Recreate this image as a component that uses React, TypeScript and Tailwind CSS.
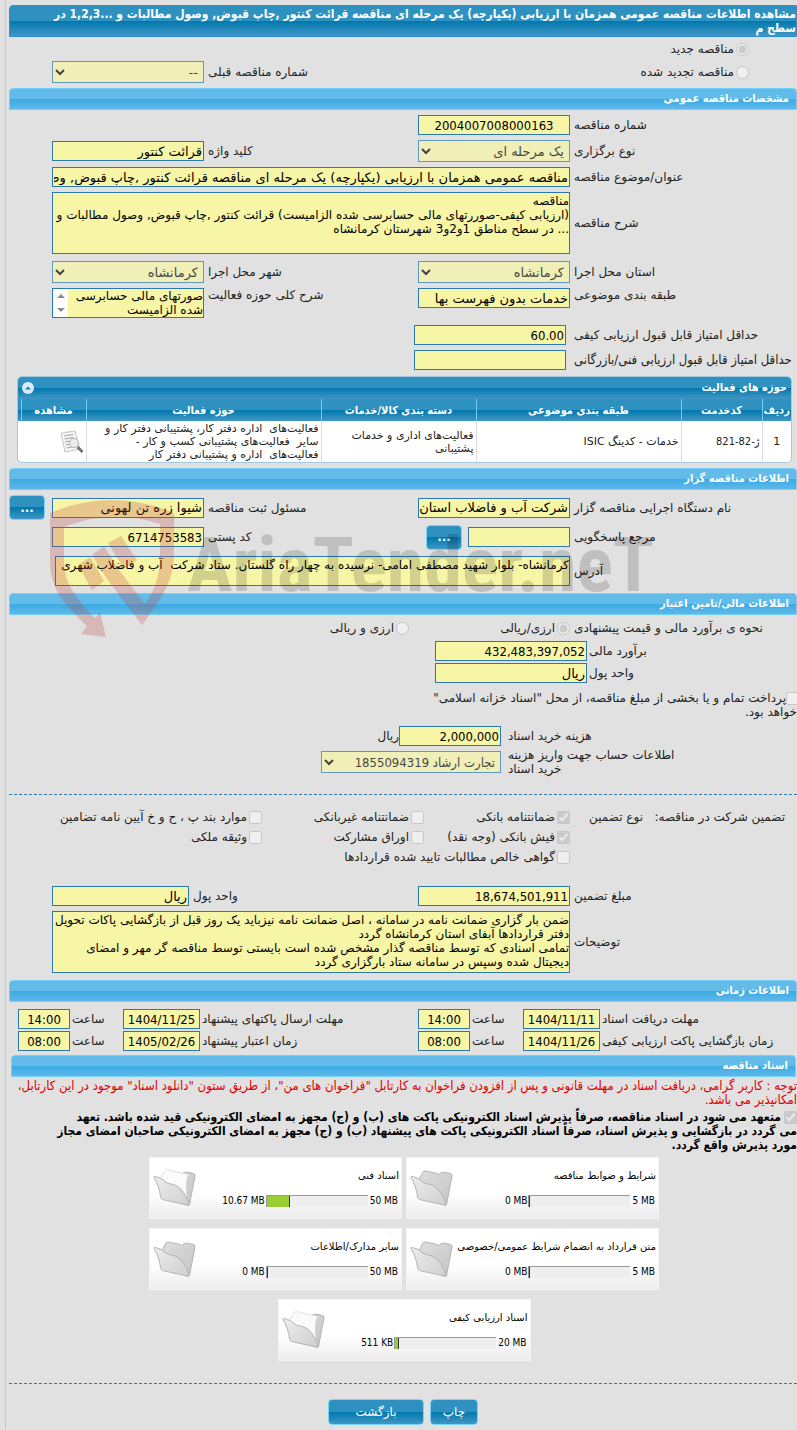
import { ReactNode } from "react";
import clsx from "clsx";

const field =
  "block w-full min-w-0 border border-[#2a7ab0] bg-[#f7f5a6] px-px text-[13px] text-black outline-none";
const row =
  "grid grid-cols-[227px_152px_minmax(0,1fr)_152px_43px] items-center";
const darkBar = "bg-[linear-gradient(#2e91c0_50%,#0078ae_50%,#4297c4)]";
const lightBar = "bg-[linear-gradient(#62bbe9_50%,#3baae3_50%,#5fb8e9)]";
const condensed = "font-['DejaVu_Sans_Condensed','DejaVu_Sans',sans-serif]";

function SectionTitle({
  children,
  className,
}: {
  children: ReactNode;
  className?: string;
}) {
  return (
    <h2
      className={clsx(
        "h-[22px] rounded-t border border-[#72d0fa] px-[7px] text-[11px] leading-5 font-bold text-white",
        condensed,
        lightBar,
        className,
      )}
    >
      {children}
    </h2>
  );
}

function Label({
  id,
  children,
  className,
}: {
  id: string;
  children: ReactNode;
  className?: string;
}) {
  return (
    <label htmlFor={id} className={clsx("pl-1 text-left", className)}>
      {children}
    </label>
  );
}

function Text({
  id,
  value,
  className,
  numeric,
}: {
  id: string;
  value: string;
  className?: string;
  numeric?: boolean;
}) {
  return (
    <input
      id={id}
      type="text"
      readOnly
      value={value}
      className={clsx(field, "h-5", numeric && condensed, className)}
    />
  );
}

function Select({
  id,
  value,
  className,
}: {
  id: string;
  value: string;
  className?: string;
}) {
  return (
    <select
      id={id}
      disabled
      className={clsx(field, "h-[22px] opacity-70", className)}
    >
      <option>{value}</option>
    </select>
  );
}

function Area({
  id,
  value,
  className,
}: {
  id: string;
  value: string;
  className?: string;
}) {
  return (
    <textarea
      id={id}
      readOnly
      value={value}
      className={clsx(
        "block w-full resize-none overflow-hidden border border-[#2a7ab0] bg-[#f7f5a6] py-px text-[12px] leading-[14px] text-black outline-none",
        className,
      )}
    />
  );
}

function Check({
  children,
  checked = false,
  type = "checkbox",
  className,
}: {
  children: ReactNode;
  checked?: boolean;
  type?: "checkbox" | "radio";
  className?: string;
}) {
  return (
    <label className={clsx("flex items-center gap-[2px]", className)}>
      <input
        type={type}
        disabled
        checked={checked}
        readOnly
        className="size-[13px] shrink-0"
      />
      <span>{children}</span>
    </label>
  );
}

function BlueButton({
  children,
  className,
  label,
}: {
  children: ReactNode;
  className?: string;
  label?: string;
}) {
  return (
    <button
      type="button"
      aria-label={label}
      className={clsx(
        "rounded-[4px] border border-[#77d5f7] text-[12px] leading-none text-white",
        darkBar,
        className,
      )}
    >
      {children}
    </button>
  );
}

function FolderIcon({ filled }: { filled?: boolean }) {
  return (
    <svg viewBox="0 0 44 40" className="h-10 w-11 shrink-0">
      <defs>
        <linearGradient id="folderBack" x1="0" y1="0" x2="1" y2="1">
          <stop offset="0" stopColor="#dedede" />
          <stop offset="1" stopColor="#c4c4c4" />
        </linearGradient>
        <linearGradient id="folderFront" x1="0" y1="0" x2="1" y2="1">
          <stop offset="0" stopColor="#ededed" />
          <stop offset="1" stopColor="#cfcfcf" />
        </linearGradient>
      </defs>
      <path
        d="M9 12 12.500 4.500Q13.300 2.700 15.500 3L25 5Q27 5.400 28.500 6.500Q31 3.500 35 4.300L40.500 5.500Q42.500 6 42 8L36.500 36.500Q36 38 34.500 37.200L14 30Z"
        fill="url(#folderBack)"
        stroke="#b4b4b4"
      />
      {filled && (
        <path
          d="M8 11Q11 2 14 1.500L36 6.500Q32 10 34 30L12 20Z"
          fill="#fbfbfb"
          stroke="#d0d0d0"
          strokeWidth=".6"
        />
      )}
      <path
        d="M1 9.500Q.600 8 2.500 8.500Q9 10 12 13.500Q14 15.500 18 16Q26 17 31 25Q34 30 36.300 36Q36 37.500 34 37L9.500 31.500Q8 31 7.700 29.500Q6 17 1 9.500Z"
        fill="url(#folderFront)"
        stroke="#b4b4b4"
      />
    </svg>
  );
}

const folders = [
  { title: "شرایط و ضوابط مناقصه", used: "0 MB", total: "5 MB", percent: 0 },
  { title: "اسناد فنی", used: "10.67 MB", total: "50 MB", percent: 23 },
  {
    title: "متن قرارداد به انضمام شرایط عمومی/خصوصی",
    used: "0 MB",
    total: "5 MB",
    percent: 0,
  },
  { title: "سایر مدارک/اطلاعات", used: "0 MB", total: "50 MB", percent: 0 },
  { title: "اسناد ارزیابی کیفی", used: "511 KB", total: "20 MB", percent: 4 },
];

function FolderCard({ title, used, total, percent }: (typeof folders)[number]) {
  return (
    <div
      dir="ltr"
      className="flex h-[62px] w-[253px] items-center border border-[#f4f4f4] bg-linear-to-b from-white from-60% to-[#ececec] pr-[2px] pl-[3px] text-[10px] leading-3 text-black"
    >
      <FolderIcon filled={percent > 0} />
      <div className="flex min-w-0 flex-1 flex-col gap-[13px]">
        <div dir="rtl" className="whitespace-nowrap">
          {title}
        </div>
        <div
          className={clsx(
            "flex items-center justify-end gap-px pr-px",
            condensed,
          )}
        >
          <span>{used}</span>
          <div className="flex h-3 w-[102px] border-t border-l border-[#999] bg-[#eee]">
            <div
              className="border-r border-[#333] bg-[#9acd32]"
              style={{ width: `${percent}%` }}
            />
          </div>
          <span className="pl-px">{total}</span>
        </div>
      </div>
    </div>
  );
}

function DocumentIcon() {
  return (
    <svg viewBox="0 0 24 24" className="size-6">
      <path
        d="M1 3 15 1 20 19 5 22Z"
        fill="#f4f4f4"
        stroke="#b9b9b9"
        strokeWidth=".8"
      />
      <path
        d="M4 6l9-1.500M4.500 9l9-1.500M5 12l5-1M6 15l4-1M6.500 18l6-1"
        stroke="#a8a8a8"
        strokeWidth="1.200"
      />
      <circle cx="14" cy="13" r="4.500" fill="#ececec" stroke="#b5b5b5" />
      <path d="m17.500 17 5 5" stroke="#6f6f6f" strokeWidth="2.600" />
    </svg>
  );
}

function Watermark() {
  return (
    <div
      dir="ltr"
      aria-hidden="true"
      className="pointer-events-none absolute top-8 left-[41px] flex items-start"
    >
      <svg
        viewBox="50 500 125 138"
        className="h-[138px] w-[125px] shrink-0 fill-[#c03c3c]/25"
      >
        <path d="M50 513Q112 487 174 513V555C174 582 160 600 142 625L107 579 119 570 145 604C155 590 160 575 160 555V524Q112 508 64 527V560C64 584 76 598 95 618L100 612 106 637 81 634 87 626C65 605 50 590 50 560Z" />
        <path d="M78 565 90 557 104 581 92 590ZM108 543 121 536 137 560 124 569Z" />
        <path d="M92 555 104 546 119 570 107 579Z" />
      </svg>
      <span className="ml-3 pt-[21px] font-['Liberation_Sans_Narrow','Roboto_Condensed','Roboto',sans-serif] text-[76px] leading-[88px] font-bold whitespace-nowrap text-black/15">
        AriaTender.neT
      </span>
    </div>
  );
}

export default function App() {
  return (
    <div
      dir="rtl"
      className="min-h-screen overflow-hidden bg-[#e1e1e1] pl-[5px] font-['DejaVu_Sans',sans-serif] text-[12px] leading-[14px] text-[#222]"
    >
      <main className="border-l border-[#c8c8c8] pt-[5px] pb-1 pl-[3px]">
        <h1
          className={clsx(
            "min-h-8 rounded-tl border border-[#2a8fdc] py-px text-[12px] font-bold text-white",
            condensed,
            darkBar,
          )}
        >
          مشاهده اطلاعات مناقصه عمومی همزمان با ارزیابی (یکپارچه) یک مرحله ای
          مناقصه قرائت کنتور ,چاپ قبوض, وصول مطالبات و ...1,2,3 در
          <br />
          سطح م
        </h1>

        <Check type="radio" checked className="h-6 pr-12">
          مناقصه جدید
        </Check>
        <div className={row}>
          <Check type="radio" className="pr-12">
            مناقصه تجدید شده
          </Check>
          <span />
          <Label id="prev">شماره مناقصه قبلی</Label>
          <Select id="prev" value="--" />
        </div>

        <SectionTitle className="mt-[5px]">مشخصات مناقصه عمومی</SectionTitle>
        <div className={clsx(row, "mt-[5px]")}>
          <Label id="number">شماره مناقصه</Label>
          <Text
            id="number"
            numeric
            value="2004007008000163"
            className="text-center"
          />
        </div>
        <div className={clsx(row, "mt-[5px]")}>
          <Label id="kind">نوع برگزاری</Label>
          <Select id="kind" value="یک مرحله ای" />
          <Label id="keyword">کلید واژه</Label>
          <Text id="keyword" value="قرائت کنتور" />
        </div>
        <div className={clsx(row, "mt-[5px]")}>
          <Label id="subject">عنوان/موضوع مناقصه</Label>
          <Text
            id="subject"
            value="مناقصه عمومی همزمان با ارزیابی (یکپارچه) یک مرحله ای مناقصه قرائت کنتور ,چاپ قبوض, وصول مطالبات و ...1,2,3 در سطح مناطق"
            className="col-span-3"
          />
        </div>
        <div className={clsx(row, "mt-[5px]")}>
          <Label id="desc">شرح مناقصه</Label>
          <Area
            id="desc"
            className="col-span-3 h-[62px]"
            value={
              "مناقصه\n(ارزیابی کیفی-صوررتهای مالی حسابرسی شده الزامیست) قرائت کنتور ,چاپ قبوض, وصول مطالبات و\n... در سطح مناطق 1و2و3 شهرستان کرمانشاه"
            }
          />
        </div>
        <div className={clsx(row, "mt-[7px]")}>
          <Label id="province">استان محل اجرا</Label>
          <Select id="province" value="کرمانشاه" />
          <Label id="city">شهر محل اجرا</Label>
          <Select id="city" value="کرمانشاه" />
        </div>
        <div className={clsx(row, "mt-[5px] !items-start")}>
          <Label id="class">طبقه بندی موضوعی</Label>
          <Text id="class" value="خدمات بدون فهرست بها" />
          <Label id="scope">شرح کلی حوزه فعالیت</Label>
          <div className="flex h-[30px] border border-[#2a7ab0] bg-[#f7f5a6]">
            <textarea
              id="scope"
              readOnly
              value="صورتهای مالی حسابرسی شده الزامیست"
              className="min-w-0 flex-1 resize-none overflow-hidden text-[12px] leading-[14px] text-black outline-none"
            />
            <div className="flex w-[15px] flex-col items-center justify-between bg-white py-[5px]">
              <svg viewBox="0 0 8 4" className="h-1 w-2 fill-[#8b8b8b]">
                <path d="M0 4 4 0 8 4Z" />
              </svg>
              <svg viewBox="0 0 8 4" className="h-1 w-2 fill-[#8b8b8b]">
                <path d="M0 0 4 4 8 0Z" />
              </svg>
            </div>
          </div>
        </div>
        <div className={clsx(row, "mt-[7px]")}>
          <Label id="minQuality">حداقل امتیاز قابل قبول ارزیابی کیفی</Label>
          <Text id="minQuality" numeric value="60.00" className="mr-1" />
        </div>
        <div className={clsx(row, "mt-[5px]")}>
          <Label
            id="minTech"
            className={clsx("text-[13px] whitespace-nowrap", condensed)}
          >
            حداقل امتیاز قابل قبول ارزیابی فنی/بازرگانی
          </Label>
          <Text id="minTech" value="" className="mr-1" />
        </div>

        <section className="mt-[6px] mr-[5px] ml-2 overflow-hidden rounded-[5px] border border-[#a6c9e2] bg-white">
          <div
            className={clsx(
              "flex h-[22px] items-center justify-between px-1",
              darkBar,
            )}
          >
            <h3 className={clsx("text-[11px] font-bold text-white", condensed)}>
              حوزه های فعالیت
            </h3>
            <button type="button" aria-label="بستن">
              <svg viewBox="0 0 12 12" className="size-3">
                <circle cx="6" cy="6" r="6" fill="#dbeaf8" />
                <path d="M3 7.500 6 4.500 9 7.500Z" fill="#217bb0" />
              </svg>
            </button>
          </div>
          <table className="w-full table-fixed border-collapse text-[11px] leading-[13px]">
            <thead className={condensed}>
              <tr className={clsx("h-[22px] text-white", darkBar)}>
                <th className="w-[29px] border-l border-[#6fcdf5] font-bold">
                  ردیف
                </th>
                <th className="w-[81px] border-l border-[#6fcdf5]">کدخدمت</th>
                <th className="w-[205px] border-l border-[#6fcdf5]">
                  طبقه بندی موضوعی
                </th>
                <th className="w-[155px] border-l border-[#6fcdf5]">
                  دسته بندی کالا/خدمات
                </th>
                <th className="border-l border-[#6fcdf5]">حوزه فعالیت</th>
                <th className="w-[65px] border-l border-[#6fcdf5]">مشاهده</th>
                <th className="w-[3px]" />
              </tr>
            </thead>
            <tbody>
              <tr className="h-[41px]">
                <td className="border-l border-[#ddd] text-center">1</td>
                <td
                  className={clsx("border-l border-[#ddd] px-[2px]", condensed)}
                >
                  ژ-82-821
                </td>
                <td className="border-l border-[#ddd] px-[2px]">
                  خدمات - کدینگ ISIC
                </td>
                <td className="border-l border-[#ddd] px-[2px]">
                  فعالیت‌های اداری و خدمات پشتیبانی
                </td>
                <td className="border-l border-[#ddd] px-[2px]">
                  فعالیت‌های&nbsp; اداره دفتر کار، پشتیبانی دفتر کار و
                  <br />
                  سایر&nbsp; فعالیت‌های پشتیبانی کسب و کار -
                  <br />
                  فعالیت‌های&nbsp; اداره و پشتیبانی دفتر کار
                </td>
                <td className="px-[2px]">
                  <DocumentIcon />
                </td>
                <td />
              </tr>
            </tbody>
          </table>
        </section>

        <div className="relative">
          <SectionTitle className="mt-[5px]">اطلاعات مناقصه گزار</SectionTitle>
          <div className={clsx(row, "mt-[5px] h-[25px]")}>
            <Label id="org">نام دستگاه اجرایی مناقصه گزار</Label>
            <Text id="org" value="شرکت آب و فاضلاب استان" />
            <Label id="clerk">مسئول ثبت مناقصه</Label>
            <Text id="clerk" value="شیوا زره تن لهونی" />
            <BlueButton
              label="انتخاب مسئول"
              className="h-[25px] w-9 justify-self-end font-bold"
            >
              ...
            </BlueButton>
          </div>
          <div className={clsx(row, "mt-1 h-[26px]")}>
            <Label id="contact">مرجع پاسخگویی</Label>
            <div className="flex items-center gap-[6px]">
              <Text id="contact" value="" className="!w-[102px]" />
              <BlueButton
                label="انتخاب مرجع"
                className="h-[25px] w-9 font-bold"
              >
                ...
              </BlueButton>
            </div>
            <Label id="postal">کد پستی</Label>
            <Text id="postal" numeric value="6714753583" />
          </div>
          <div className={clsx(row, "mt-[6px]")}>
            <Label id="address">آدرس</Label>
            <Area
              id="address"
              className="col-span-3 h-[30px] !w-[calc(100%-3px)]"
              value="کرمانشاه- بلوار شهید مصطفی امامی- نرسیده به چهار راه گلستان. ستاد شرکت  آب و فاضلاب شهری"
            />
          </div>
          <SectionTitle className="mt-[7px]">
            اطلاعات مالی/تامین اعتبار
          </SectionTitle>
          <Watermark />
        </div>

        <div className="flex h-[26px] items-center">
          <span className="w-[227px] pl-1 text-left">
            نحوه ی برآورد مالی و قیمت پیشنهادی
          </span>
          <Check type="radio" checked className="w-[161px]">
            ارزی/ریالی
          </Check>
          <Check type="radio">ارزی و ریالی</Check>
        </div>
        <div className="grid grid-cols-[210px_152px] items-center gap-y-[2px]">
          <Label id="estimate" className="!pl-[2px]">
            برآورد مالی
          </Label>
          <Text id="estimate" numeric value="432,483,397,052" />
          <Label id="unit" className="!pl-[2px]">
            واحد پول
          </Label>
          <Text id="unit" value="ریال" />
        </div>

        <label className="mt-[8px] block w-[372px]">
          <input
            type="checkbox"
            disabled
            className="-mr-[2px] size-[13px] align-bottom"
          />
          پرداخت تمام و یا بخشی از مبلغ مناقصه، از محل "اسناد خزانه اسلامی"
          <br />
          خواهد بود.
        </label>

        <div className="mt-[7px] flex items-center">
          <Label id="fee" className="w-[296px] !pl-[7px]">
            هزینه خرید اسناد
          </Label>
          <Text id="fee" numeric value="2,000,000" className="!w-[102px]" />
          <span>ریال</span>
        </div>
        <div className="mt-[5px] flex h-[22px] items-center">
          <Label id="account" className="w-[296px] !pl-[7px]">
            اطلاعات حساب جهت واریز هزینه
            <br />
            خرید اسناد
          </Label>
          <Select
            id="account"
            value="تجارت ارشاد 1855094319"
            className={clsx("!w-[180px]", condensed)}
          />
        </div>

        <hr className="mt-[21px] border-t border-dashed border-[#2a7ab0]" />

        <div className="mt-3 grid auto-rows-[20px] grid-cols-[142px_73px_146px_162px_minmax(0,1fr)] items-center pr-3">
          <span>تضمین شرکت در مناقصه:</span>
          <span>نوع تضمین</span>
          <Check checked>ضمانتنامه بانکی</Check>
          <Check>ضمانتنامه غیربانکی</Check>
          <Check>موارد بند پ ، ح و خ آیین نامه تضامین</Check>
          <Check checked className="col-start-3">
            فیش بانکی (وجه نقد)
          </Check>
          <Check>اوراق مشارکت</Check>
          <Check>وثیقه ملکی</Check>
          <Check className="col-span-3 col-start-3">
            گواهی خالص مطالبات تایید شده قراردادها
          </Check>
        </div>

        <div className="mt-[19px] grid grid-cols-[227px_152px_minmax(0,1fr)_137px_43px] items-center">
          <Label id="guarantee">مبلغ تضمین</Label>
          <Text id="guarantee" numeric value="18,674,501,911" />
          <Label id="gUnit">واحد پول</Label>
          <Text id="gUnit" value="ریال" />
        </div>
        <div className={clsx(row, "mt-[5px]")}>
          <Label id="notes">توضیحات</Label>
          <Area
            id="notes"
            className="col-span-3 h-[62px]"
            value={
              "ضمن بار گزاری ضمانت نامه در سامانه ، اصل ضمانت نامه نیزباید یک روز قبل از بازگشایی پاکات تحویل\nدفتر قراردادها آبفای استان کرمانشاه گردد\nتمامی اسنادی که توسط مناقصه گذار مشخص شده است بایستی توسط مناقصه گر مهر و امضای\nدیجیتال شده وسپس در سامانه ستاد بارگزاری گردد"
            }
          />
        </div>

        <SectionTitle className="mt-[7px]">اطلاعات زمانی</SectionTitle>
        <div className="mt-[7px] grid grid-cols-[197px_77px_53px_52px_minmax(0,1fr)_77px_53px_52px] items-center gap-y-[2px] pl-[9px]">
          <Label id="d1" className="!pl-[2px]">
            مهلت دریافت اسناد
          </Label>
          <Text id="d1" numeric value="1404/11/11" className="text-center" />
          <Label id="t1" className="!pl-[2px]">
            ساعت
          </Label>
          <Text id="t1" numeric value="14:00" className="text-center" />
          <Label id="d2" className="!pl-[2px]">
            مهلت ارسال پاکتهای پیشنهاد
          </Label>
          <Text id="d2" numeric value="1404/11/25" className="text-center" />
          <Label id="t2" className="!pl-[2px]">
            ساعت
          </Label>
          <Text id="t2" numeric value="14:00" className="text-center" />
          <Label id="d3" className="!pl-[2px]">
            زمان بازگشایی پاکت ارزیابی کیفی
          </Label>
          <Text id="d3" numeric value="1404/11/26" className="text-center" />
          <Label id="t3" className="!pl-[2px]">
            ساعت
          </Label>
          <Text id="t3" numeric value="08:00" className="text-center" />
          <Label id="d4" className="!pl-[2px]">
            زمان اعتبار پیشنهاد
          </Label>
          <Text id="d4" numeric value="1405/02/26" className="text-center" />
          <Label id="t4" className="!pl-[2px]">
            ساعت
          </Label>
          <Text id="t4" numeric value="08:00" className="text-center" />
        </div>

        <SectionTitle className="mt-1 mr-px ml-[2px]">
          اسناد مناقصه
        </SectionTitle>
        <p className={clsx("mt-[2px] text-[13px] text-[#e00000]", condensed)}>
          توجه : کاربر گرامی، دریافت اسناد در مهلت قانونی و پس از افزودن فراخوان
          به کارتابل "فراخوان های من"، از طریق ستون "دانلود اسناد" موجود در این
          کارتابل،
          <br />
          امکانپذیر می باشد.
        </p>
        <label
          className={clsx("mt-[3px] block font-bold text-black", condensed)}
        >
          <input
            type="checkbox"
            disabled
            checked
            readOnly
            className="ml-[3px] size-[13px] align-bottom"
          />
          متعهد می شود در اسناد مناقصه، صرفاً پذیرش اسناد الکترونیکی پاکت های
          (ب) و (ج) مجهز به امضای الکترونیکی قید شده باشد. تعهد
          <br />
          می گردد در بازگشایی و پذیرش اسناد، صرفاً اسناد الکترونیکی پاکت های
          پیشنهاد (ب) و (ج) مجهز به امضای الکترونیکی صاحبان امضای مجاز
          <br />
          مورد پذیرش واقع گردد.
        </label>

        <div className="mt-[5px] pl-[2px]">
          <div className="mx-auto flex max-w-[520px] flex-wrap justify-center gap-x-1 gap-y-[9px]">
            {folders.map((item) => (
              <FolderCard key={item.title} {...item} />
            ))}
          </div>
        </div>

        <hr className="mt-[22px] border-t border-dashed border-[#2a7ab0]" />
        <div className="mt-[15px] flex justify-center gap-[6px]">
          <BlueButton className="h-[26px] w-12">چاپ</BlueButton>
          <BlueButton className="h-[26px] w-24">بازگشت</BlueButton>
        </div>
      </main>
    </div>
  );
}
